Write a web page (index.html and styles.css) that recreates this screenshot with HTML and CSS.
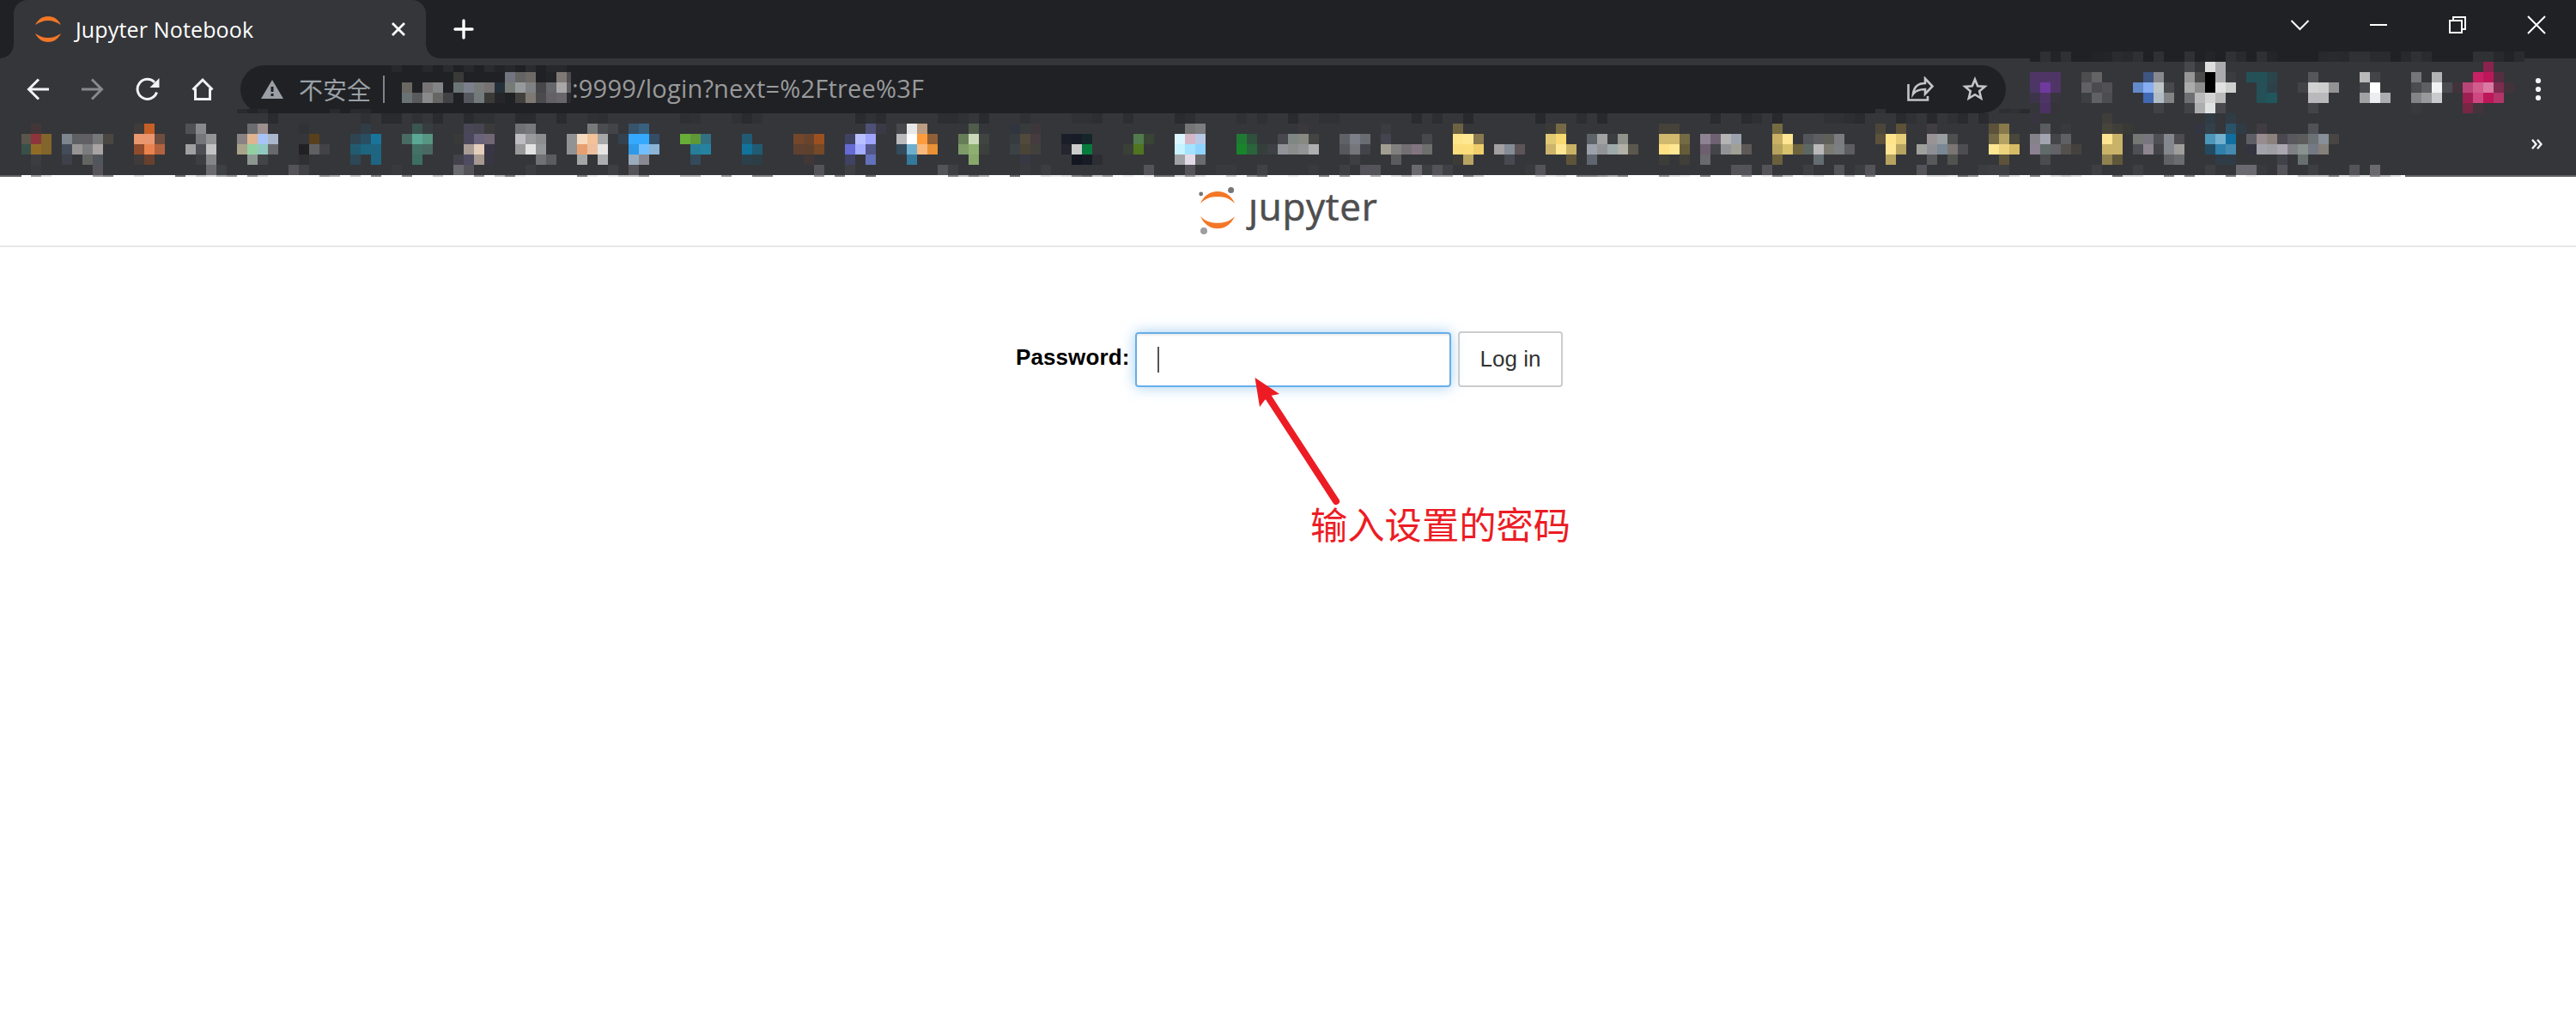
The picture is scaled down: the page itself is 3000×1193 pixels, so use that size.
FILE: index.html
```html
<!DOCTYPE html>
<html lang="zh-CN">
<head>
<meta charset="utf-8">
<title>Jupyter Notebook</title>
<link rel="stylesheet" href="styles.css">
</head>
<body>
<header class="browser">
  <div class="tabstrip">
    <div class="tab">
      <svg class="favicon" width="30" height="30" viewBox="0 0 30 30" fill="#f37726"><path d="M0 10C3 4 8 0 15 0s12 4 15 10C25 7 21 5 15 5S5 7 0 10Z"/><path d="M0 20c3 6 8 10 15 10s12-4 15-10c-5 3-9 5-15 5S5 23 0 20Z"/></svg>
      <span class="tab-title">Jupyter Notebook</span>
      <svg class="tab-close" width="16" height="16" viewBox="0 0 16 16" stroke="#fff" stroke-width="2.8"><path d="M1 1l14 14M15 1L1 15"/></svg>
    </div>
    <svg class="new-tab" width="24" height="24" viewBox="0 0 24 24" stroke="#fff" stroke-width="3.4" stroke-linecap="round"><path d="M12 2v20M2 12h20"/></svg>
    <div class="window-buttons">
      <svg width="20" height="20" viewBox="0 0 20 20"><path d="M.5 5l10 10 10-10"/></svg>
      <svg width="20" height="20" viewBox="0 0 20 20"><path d="M0 10h20"/></svg>
      <svg width="20" height="20" viewBox="0 0 20 20"><path d="M1 5h14v14H1zM5 5V1h14v14h-4"/></svg>
      <svg width="20" height="20" viewBox="0 0 20 20"><path d="M0 0l20 20M20 0L0 20"/></svg>
    </div>
  </div>
  <div class="toolbar">
    <div class="nav">
      <svg width="26" height="26" viewBox="0 0 26 26"><path d="M26 13H3M14 1.500L2.500 13 14 24.500"/></svg>
      <svg class="disabled" width="26" height="26" viewBox="0 0 26 26"><path d="M0 13h23M12 1.500L23.500 13 12 24.500"/></svg>
      <svg class="reload" width="28" height="28" viewBox="0 0 28 28"><path d="M24.500 17.500A11.500 11.500 0 1 1 22 6"/><path class="solid" d="M27.500 1v11H16.500z"/></svg>
      <svg class="home" width="28" height="28" viewBox="0 0 28 28"><path d="M2.500 14.500L14 3l11.500 11.500M5.500 13v12.500h17V13"/></svg>
    </div>
    <div class="omnibox">
      <svg class="warning" width="26" height="22" viewBox="0 0 26 22"><path fill="#9aa0a6" d="M13 0l13 22H0z"/><path stroke="#202124" stroke-width="3" d="M13 8v6M13 16v3"/></svg>
      <span class="insecure">不安全</span>
      <span class="divider"></span>
      <span class="url">:9999/login?next=%2Ftree%3F</span>
      <svg class="share" width="32" height="30" viewBox="0 0 32 30"><path d="M1.500 9v18.500H24V23M7 20.500C8 12 13 8 21 8V2.500l8.500 9-8.500 9V15c-7 0-11 1.500-14 5.500z"/></svg>
      <svg class="star" width="30" height="30" viewBox="0 0 30 30"><path d="M15 3.500l3.200 7.700 8.400.7-6.400 5.400 2 8.200L15 21.200l-7.200 4.300 2-8.200-6.400-5.400 8.400-.7z"/></svg>
    </div>
    <svg class="kebab" width="8" height="28" viewBox="0 0 8 28" fill="#f1f3f4"><circle cx="4" cy="4" r="3.100"/><circle cx="4" cy="14" r="3.100"/><circle cx="4" cy="24" r="3.100"/></svg>
  </div>
  <div class="bookmarks">
    <svg width="13" height="12" viewBox="0 0 13 12" fill="none" stroke="#f1f3f4" stroke-width="2.400"><path d="M1 .8L5.500 6 1 11.200M7 .8L11.500 6 7 11.200"/></svg>
  </div>
  <svg class="mosaic" id="mosaic" width="3000" height="206" viewBox="0 0 3000 206" shape-rendering="crispEdges"></svg>
</header>
<div class="page-header">
  <svg class="logo" width="44" height="60" viewBox="0 0 44 60"><path fill="#f37726" d="M2 24C6 15 13 10 22 10s16 5 20 14C36 18 30 16.300 22 16.300S8 18 2 24ZM2 39c4 9 11 14.300 20 14.300S38 48 42 39c-6 6-12 7.800-20 7.800S8 45 2 39Z"/><circle cx="2.700" cy="13" r="2.400" fill="#767677"/><circle cx="37.600" cy="8.600" r="3.500" fill="#767677"/><circle cx="6" cy="56" r="4" fill="#9e9e9e"/></svg>
  <span class="wordmark">ȷupyter</span>
</div>
<main class="login">
  <label class="label">Password:</label>
  <div class="field"><span class="caret"></span></div>
  <div class="button">Log in</div>
  <svg class="arrow" width="110" height="160" viewBox="0 0 110 160"><path d="M14 18L96 144" stroke="#ed1c24" stroke-width="8" stroke-linecap="round"/><path fill="#ed1c24" d="M1.500 0L30 19l-10 2-7 5-6 8z"/></svg>
  <div class="note">输入设置的密码</div>
</main>
<script src="mosaic.js"></script>
</body>
</html>
```
FILE: styles.css
```css
* { box-sizing: border-box; }
body { margin: 0; width: 3000px; height: 1193px; background: #fff; overflow: hidden; font-family: "Liberation Sans", "Noto Sans CJK SC", sans-serif; }
svg { display: block; flex: none; }
.browser { position: relative; height: 206px; background: #35363a; border-bottom: 2px solid #606165; }
.tabstrip { display: flex; height: 68px; background: #202124; padding-left: 16px; }
.tab { position: relative; display: flex; align-items: center; width: 480px; height: 68px; padding: 0 24px 0 25px; background: #35363a; border-radius: 16px 16px 0 0; }
.tab::before, .tab::after { content: ""; position: absolute; bottom: 0; width: 16px; height: 16px; }
.tab::before { left: -16px; background: radial-gradient(circle at 0 0, #202124 15.500px, #35363a 16px); }
.tab::after { right: -16px; background: radial-gradient(circle at 100% 0, #202124 15.500px, #35363a 16px); }
.tab-title { margin-left: 17px; font: 25px/34px "Open Sans", sans-serif; letter-spacing: 0.15px; color: #fff; flex: 1; white-space: nowrap; }
.new-tab { margin: 22px 0 0 32px; }
.window-buttons { display: flex; gap: 72px; margin: 19px 36px 0 auto; fill: none; stroke: #fff; stroke-width: 2; }
.window-buttons svg { overflow: visible; }
.toolbar { display: flex; align-items: center; height: 72px; padding: 0 40px 0 31px; }
.nav { display: flex; align-items: center; gap: 38px; width: 249px; fill: none; stroke: #f1f3f4; stroke-width: 3; }
.nav .disabled { stroke: #88898c; }
.nav .reload { margin-left: -1px; }
.nav .home { margin-left: -2px; }
.nav .solid { fill: #f1f3f4; stroke: none; }
.omnibox { display: flex; align-items: center; width: 2056px; height: 56px; padding: 0 21px 0 24px; border-radius: 28px; background: #202124; color: #9aa0a6; }
.insecure { margin-left: 18px; width: 98px; font: 28px/40px "Noto Sans CJK SC", sans-serif; }
.divider { width: 2px; height: 32px; background: #808388; }
.url { margin-left: 218px; padding-bottom: 2px; font: 29px/40px "Open Sans", sans-serif; letter-spacing: 0.2px; color: #999a9c; white-space: nowrap; flex: 1; }
.share, .star { fill: none; stroke: #c4c5c7; stroke-width: 2.6; }
.star { margin-left: 32px; }
.kebab { margin-left: auto; }
.bookmarks { display: flex; justify-content: flex-end; height: 64px; padding: 22px 39px 0 0; }
.mosaic { position: absolute; left: 0; top: 0; }
.page-header { display: flex; height: 82px; padding: 7px 0 0 1396px; border-bottom: 2px solid #e7e7e7; }
.wordmark { margin: -3px 0 0 14px; font: 44px/60px "Open Sans", sans-serif; color: #4e4e4e; letter-spacing: 0.7px; -webkit-text-stroke: 0.6px #4e4e4e; }
.login { position: relative; display: flex; align-items: flex-start; padding: 98px 0 0 1183px; }
.label { width: 139px; padding-top: 15px; font-size: 26px; line-height: 30px; font-weight: bold; color: #000; letter-spacing: 0.1px; }
.field { width: 368px; height: 64px; margin-top: 1px; padding: 15px 24px; border: 2px solid #66afe9; border-radius: 4px; box-shadow: inset 0 2px 2px rgba(0,0,0,.075), 0 0 16px rgba(102,175,233,.6); }
.caret { display: block; width: 2px; height: 30px; background: #555; }
.button { width: 122px; height: 65px; margin-left: 8px; border: 2px solid #ccc; border-radius: 4px; text-align: center; font-size: 26px; line-height: 61px; color: #333; }
.arrow { position: absolute; left: 1460px; top: 152px; }
.note { position: absolute; left: 1526px; top: 289px; font: 43.300px/64px "Noto Sans CJK SC", sans-serif; color: #ed1c24; white-space: nowrap; }
```
FILE: mosaic.js
```js
// Pixelated regions: [top, height, "column:colour,colour ..."], columns are 12px wide, "-" skips one.
const rows = [
[60,12,"198:2f3034,222427,2f3034 203:222326,232427,2a2b2f,28292d,2f3034,-,2f3034,-,-,232427 212:303135,-,242528,-,303135,292a2d,-,2f3034,242528 225:28292d,292a2e,28292d,303135,303135,2a2b2f,2a2b2f,-,28292c,303135,2a2b2f 240:303135,303135,28292c,222326,2a2b2e"],
[72,12,"212:47484c,-,dedede,ababad 241:8a234e"],
[76,8,"38:27282c,-,-,27282c,-,2a2b2f,-,27282c,-,2a2b2f,232427,27282c,-,2b2c30,-,27282c,27282c"],
[84,12,"44:3a3a38 49:72757f,646464,6f6a66,-,222428,7f7975,4f4d50 197:4f3566,4f3566,4f3566 202:4d4d50,646466 208:3f5480,88898d 212:969697,4b4b4c,000,ababad,3b3c40,-,245158,2b454d 219:245158,2b454d 224:56575b 229:bababb,434448 234:757679,-,b2b3b5 240:c82165,be1759,552e42"],
[96,12,"39:6b6762,-,787476,828485,-,6c7576,7b808c,777c7b,767172,243039,767b78,979a9c,808183,47464b,66676a,a9a7a8,605d60 197:4c3666,7039a0,4f3566 202:616164,4b4a4e,515155 207:638acb,87adf2,bdc5c9,48494d 212:ababac,8e8e8f,000,e1e1e2,cececf 219:265058,2d4149 223:424347,d2d2d3,cececf,939395 229:48494d,fff 234:4b4c50,5e5f63,f1f2f4,4a4b50,42333b,b94477,d25c8c,da7aa3,7e2b50,42333b"],
[108,12,"39:6a7373,595a5b,8a8a8c,666665,424246,-,55575f,737a7b,3a3b39,262628,-,41403d,7f7974,4b4a4c,636166,68666b,2c2c2f 197:3d344b,4f3566,38353f 202:3e3f43,606164,4d4d50 208:4168b2,b2bcc5,838486 212:6e6f72,bababb,d3d3d4,bababb 219:245057,20565c 224:b9b9bb,b9b9bb 229:a1a2a4,ecedef,acadae 234:838486,98999b,c9cacc,-,-,9e1f51,cf4780,be1759,b3356a"],
[120,12,"198:4b3263,36343a 209:404145 212:424347,adadaf,e0e1e1,49494d 224:434448 234:38393d 239:752744,43333b"],
[127,5,"11:- 23:2a2b2f,232428,2a2b2f 32:292a2e,- 34:2a2b2f,28292d 182:303135 194:2d2e32,303135,2a2b2f"],
[132,12,"26:2a2b2f 35:303135 37:2a2b2f,2a2b2f,-,303135 42:2a2b2f 45:2a2b2f,303135,303135 50:2a2b2f,2a2b2f,-,-,2a2b2f 57:303135,2e2f33 66:2e2f33,303135 71:303135,2a2b2f,303135 83:2a2b2f,303135,2b2c30 91:2d2e32,2d2e32,303135,-,2a2b2f 99:303135 104:303135,303135,2d2e32 109:2d2e32 114:2a2b2f,2d2e32 120:303135,-,303135 125:2a2b2f,-,-,303135,303135 137:2a2b2f,-,2d2e32,-,-,28292d 149:28292d 153:2d2e32,-,28292d 165:-,2a2b2f 169:2a2b2f,2e2f33,-,28292d 177:303135,303135,2d2e32,2a2b2f 184:2a2b2f,303135,-,28292d 189:303135,2a2b2f,-,2a2b2f 197:383541 204:403e3a 214:303c44,-,303c44"],
[144,12,"3:433638 13:403a3a,c65f26 18:505155,89898b 24:6b6d6e,9c8f8f 29:313235 35:303c46 40:3b5550,373d40 45:494656,464550,3a3a3b 50:707175,77787a 57:787979,4b4c4f,434448 61:37546a 62:39617f 84:4f5076,3a3a46 87:47484c,e8e8e9,bb9d82 94:505d4b 98:31353f,373b3c,3d373c 115:757576,7c7d7f 126:3b383c 134:3b3c40 141:6d6242 150:3b3a38,756a45 161:45423a,45423a 172:756b43 182:4a473a,-,5d5138 187:403e43 193:5c523b,87794a 198:5b5c60,-,393a3e 204:47443b,403e39,393936 213:333640,314049,-,2a5268,2f3c45 219:413c44 224:515257"],
[156,12,"2:5a564b,8c353b,81652a,-,7d858e,5f6064,615f64,757778,4a4743 13:ea976f,ea976f,6e4e40 19:757678,939495 23:888284,dfb48f,a8c3f6,a9b7cb 30:58401d 34:2e4451,284e61,19749a 39:486c63,5ba796,569683 44:39393a,4a475c,69637b,706676 50:bebec0,999a9b,8c8d8e 55:919294,f6dbc1,f3c298,a5a7a9 60:34414f,35a9ff,35a9ff,344e67 66:67ae39,5e9838,327184 72:205b74 77:74472b,68442e,9c501f 82:404262,b9c0ff,9fa5ff 87:bababc,fff,ff9b3b,905f36 93:677d58,cadab9,414541 98:353b3e,514a3c,463b3f 103:1a1e29,171c27,14262a 110:517b4b,3a4434 114:dbf6ff,d4b8c8,b8c9e5 120:1f7933,2e503c 124:48474d,7f8784,888982,444443 130:5f6266,7c7f88,696c70 134:42454f,-,-,-,47484c 141:ffe58a,ffe893,89794f 150:e2c973,f9d971 154:5d6469,a3a2a2,3d3e41,91928b 161:d0b86d,d0b86d,746a44 165:8e8393,6e6273,b4b4b5,9ca2ad 172:c9b065,ffe693 175:52555a,5d5d62,5f6059,7c7b80 182:5c523b,ffe48a,e5cd79 187:999395,989ea1,4d504e 193:736945,b4a361,49463a 197:858289,a2a5b0,444549,5f6064 204:ffe591,c9b369,-,757774,79757f,4f5055,84888e,4e4c50 214:4c96b9,75b0cf,116f9f 218:5e5e66,978c90,8b827e,4b4850,58585e,5c5c5c,6c7175,878f98,484542"],
[168,12,"2:38504a,906d27,81652a,-,434c59,979594,7a7c7f,a7a4a3 13:904c2b,e9824f,b2633e 18:a0a0a2,4e4f54,c2c2c4 23:aaa38c,93d0a1,91c9c0,69696c 29:212124,606063,434347 34:225b70,1d6580,1d6580 40:447165,496962 45:a99b95,e5cebb,383644 50:99999a,e3e3e3,959698 55:919294,e79f70,eebf9e,e6e5e3 61:2f99e8,72bfff,8bb4d7 67:267e99,2583a2 72:11739b,205b74 77:5e4130,5e412d,764927 82:656bd3,a3adff,515686 87:334b5a,6eafcf,f8ba7c,e99134 93:7e9b68,8eaf70,3b403d 98:3a4245,4a4436,41403d 103:23262f,cacbcc,077a3e 109:394036,507521 114:c7f2ff,a4e3ff,8ed4ff 120:18842b,2b643b,343f3b,3d4045,919399,8b8d8d,929394,afafaf 130:56585d,73767b,434449 134:a39e92,80807f,737074,83757f,6d6f6d 141:fadd7b,fbdd7a,efcf6b,-,a3a0a1,848c95,5c5456 150:ccb46c,ffe693,c9b166 154:9da1ac,929397,9eaaa9,b2b0a7,5a584d 161:ffe084,ffe693,665c3a 165:6d5f70,434549,929396,a0a096,5d5957 172:b6a35e,d9c16b,6e6340,5d6865,b9b9ba,7b7b72,7b7e83,5e5e62 183:ffe693,b6a460 186:9ea09a,8e8f95,7a8795,7b7573,4e4e52 193:ffe693,ebd37d,d5bb66 197:8b8190,606a69,636269,53504d,45413f 204:c9b369,c9b369,-,4f5055,8d8590,444348,84888e,a09e9b 214:234b60,2f80ab,458bb1 218:343440,a2a2ab,9e9ea3,aaa7b0,808184,88928e,757984,858079"],
[180,12,"3:3c3d41 6:3e404a,-,636562,50565b 13:403a3a,68402e 19:3d3e42,848587 24:8d9792,434448 29:303032 34:2c4856,-,1d6580 40:3d6e64 44:43414b,4f4b60,a69992,383641 52:707175,5b5c60 56:a4a5a5,-,acadaf 61:9aabbd,888992 67:334a5b 72:2b404a,2d3d46 78:403736 82:404262,-,6271b9 88:34789c 94:88a76a 99:363843 104:131722,171b25,2d2e33 114:a0a1a2,e2dbe7,6a6b6e 131:3e3f43 135:5b5b5e 141:3c3b36,b7a462 146:46494f 152:5e5439 154:5f666f 161:3d3c38,-,403e38 165:69696e 172:6a603d 176:636d71 183:b6a35f 187:59595c,-,505350 194:5d533a 198:4a4c4e 204:908150,5f573b 210:606266,6b6c70 215:303c45,303c45 221:414247,-,67706e"],
[192,12,"3:393a3e 9:56545a 20:69696e,3e3f43 28:545359,404145 38:393a3e 44:69696f,545359 51:3c3d41 59:3e3f43,-,545359 79:545359 82:3e3f43 91:545359,3e3f43 99:393a3e 101:3c3d41 111:545359 115:545359 118:393a3e,393a3e 122:404145 127:393a3e 130:3e3f43,-,545359,545359 137:69696f,3e3f43,545359,404145 148:393a3e,545359 168:545359,545359,-,545359 175:3e3f43 178:545359,-,3c3d41,545359 186:545359 192:3c3d41,3e3f43,3e3f43 198:393a3e 203:3e3f43 207:3e3f43 214:3e3f43 217:69696f,69696f,393a3e,-,545359 224:3e3f43 228:545359,-,69696f"],
[204,2,"3:97979b,dddddf 9:97979b,818187 13:dcdcdf 17:6d6c71,ececee,c5c5c7,dcdcdf,b0b0b4,97979b 24:97979b,dcdcdf 31:97979b,b0b0b4 34:c5c5c7,-,818187 39:818187 42:c5c5c7 46:97979b,-,c5c5c7,818187,ececee 56:818187,ececee,-,ececee,c5c5c7,c5c5c7,97979b 66:b0b0b4,b0b0b4 70:97979b 73:818187,818187 79:97979b 81:818187 84:6d6c71 92:818187,c5c5c7,818187,b0b0b4 98:6d6c71 101:dcdcdf,ececee,dcdcdf,818187,6d6c71,c5c5c7,97979b 109:ececee,-,ececee,6d6c71,6d6c71,dcdcdf,97979b,dcdcdf 119:c5c5c7,-,97979b,6d6c71 125:ececee 128:818187,-,97979b 133:b0b0b4,-,dcdcdf,b0b0b4,dcdcdf,-,b0b0b4,b0b0b4,-,818187,c5c5c7 149:c5c5c7,ececee,dcdcdf,-,818187,818187,97979b,b0b0b4,818187 161:97979b,dcdcdf,ececee,-,818187 169:97979b,-,ececee,818187,c5c5c7,-,ececee,dcdcdf 179:c5c5c7,-,818187 187:dcdcdf,dcdcdf,ececee,6d6c71,97979b 194:97979b,dcdcdf 197:818187,-,dcdcdf,c5c5c7,dcdcdf 205:6d6c71,dcdcdf,dcdcdf,-,-,818187,-,818187 216:818187,-,ececee 223:c5c5c7,c5c5c7,c5c5c7,818187,dcdcdf,b0b0b4,dcdcdf,818187,b0b0b4,dcdcdf"]
];
const svg = document.getElementById("mosaic");
function tile(x, y, w, h, fill) {
  const r = document.createElementNS("http://www.w3.org/2000/svg", "rect");
  r.setAttribute("x", x); r.setAttribute("y", y);
  r.setAttribute("width", w); r.setAttribute("height", h);
  r.setAttribute("fill", "#" + fill);
  svg.appendChild(r);
}
tile(25, 204, 2776, 2, "fff");
tile(2364, 60, 576, 12, "202124");
for (const [y, h, text] of rows) {
  for (const run of text.trim().split(/\s+/)) {
    const [start, colours] = run.split(":");
    colours.split(",").forEach((c, i) => {
      if (c === "-") return;
      const col = +start + i;
      const left = Math.max(col * 12, 25);
      const right = col === 55 && y >= 76 && y <= 108 ? 665 : (col + 1) * 12;
      tile(left, y, right - left, h, c);
    });
  }
}
```
